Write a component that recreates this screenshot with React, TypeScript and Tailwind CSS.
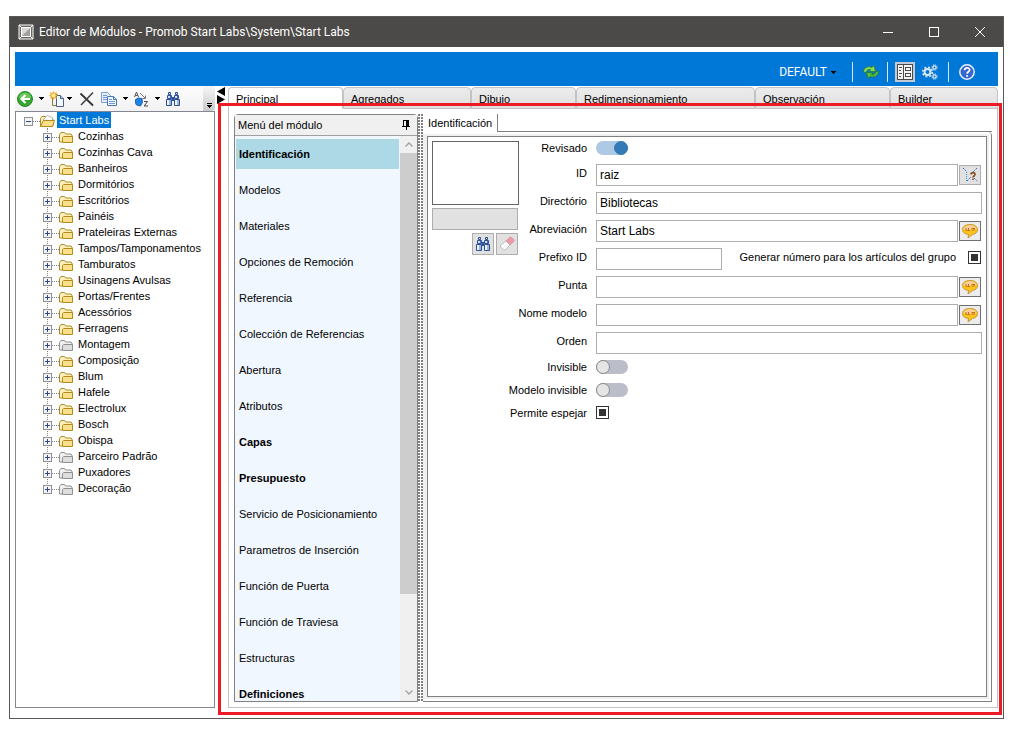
import React from 'react';

type FolderProps = {
    name: string;
    gray?: boolean;
};

type MenuItem = {
    label: string;
    bold?: boolean;
};

const folders: FolderProps[] = [
    { name: 'Cozinhas' },
    { name: 'Cozinhas Cava' },
    { name: 'Banheiros' },
    { name: 'Dormitórios' },
    { name: 'Escritórios' },
    { name: 'Painéis' },
    { name: 'Prateleiras Externas' },
    { name: 'Tampos/Tamponamentos' },
    { name: 'Tamburatos' },
    { name: 'Usinagens Avulsas' },
    { name: 'Portas/Frentes' },
    { name: 'Acessórios' },
    { name: 'Ferragens' },
    { name: 'Montagem', gray: true },
    { name: 'Composição' },
    { name: 'Blum' },
    { name: 'Hafele' },
    { name: 'Electrolux' },
    { name: 'Bosch' },
    { name: 'Obispa' },
    { name: 'Parceiro Padrão', gray: true },
    { name: 'Puxadores', gray: true },
    { name: 'Decoração', gray: true },
];

const menuItems: MenuItem[] = [
    { label: 'Identificación', bold: true },
    { label: 'Modelos' },
    { label: 'Materiales' },
    { label: 'Opciones de Remoción' },
    { label: 'Referencia' },
    { label: 'Colección de Referencias' },
    { label: 'Abertura' },
    { label: 'Atributos' },
    { label: 'Capas', bold: true },
    { label: 'Presupuesto', bold: true },
    { label: 'Servicio de Posicionamiento' },
    { label: 'Parametros de Inserción' },
    { label: 'Función de Puerta' },
    { label: 'Función de Traviesa' },
    { label: 'Estructuras' },
    { label: 'Definiciones', bold: true },
];

const tabs = ['Principal', 'Agregados', 'Dibujo', 'Redimensionamiento', 'Observación', 'Builder'];

/* ---------- icons ---------- */

const Caret = () => (
    <svg width="5" height="3" viewBox="0 0 5 3" shapeRendering="crispEdges">
        <path d="M0 0h5v1H4v1H3v1H2V2H1V1H0z" fill="#000" />
    </svg>
);

const BackIcon = () => (
    <svg width="16" height="16" viewBox="0 0 16 16">
        <circle cx="8" cy="8" r="7.500" fill="#35a52f" stroke="#2c8a2a" />
        <path d="M2 7a6 5.500 0 0 1 12 0q-6 2-12 0z" fill="#8fdc78" opacity=".6" />
        <path d="M13 8H5M8.500 4 4.500 8l4 4" fill="none" stroke="#fff" strokeWidth="2.200" />
    </svg>
);

const NewIcon = () => (
    <svg width="16" height="16" viewBox="0 0 16 16">
        <path d="M3.500 3.500h5v11h-5z" fill="#f3f3f3" stroke="#8a7440" />
        <path d="M7.500 4.500h4l3 3v8h-7z" fill="#f4f8ff" stroke="#4a5f8c" />
        <path d="M11.500 4.500v3h3" fill="#c5d6f2" stroke="#4a5f8c" />
        <path d="M4.500 0l1.200 2.200L8 1l-.8 2.500L9 4.500l-1.800 1L8 8 5.700 6.800 4.500 9 3.300 6.800 1 8l.8-2.500-1.800-1 1.800-1L1 1l2.300 1.200z" fill="#f2a52a" />
        <circle cx="4.500" cy="4.500" r="2" fill="#ffee9a" />
    </svg>
);

const DeleteIcon = () => (
    <svg width="16" height="16" viewBox="0 0 16 16">
        <path d="M1.500 2.500l12.500 12" stroke="#333" strokeWidth="1.800" />
        <path d="M14 1.500 2 14" stroke="#444" strokeWidth="1.600" />
    </svg>
);

const CopyIcon = () => (
    <svg width="16" height="16" viewBox="0 0 16 16">
        <path d="M.5 1.500h6l3 3v7h-9z" fill="#e6effb" stroke="#7d9fd6" />
        <path d="M2 4.500h4M2 6.500h4M2 8.500h4" stroke="#6f98d8" />
        <path d="M6.500 5.500h6l3 3v6h-9z" fill="#f2f7fe" stroke="#4a76bd" />
        <path d="M12.500 5.500v3h3" fill="none" stroke="#4a76bd" />
        <path d="M8 8.500h3M8 10.500h6M8 12.500h6" stroke="#6f98d8" />
    </svg>
);

const SortIcon = () => (
    <svg width="16" height="16" viewBox="0 0 16 16">
        <path d="M1.500 6 3.500 1l2 5M2.500 4.500h2" fill="none" stroke="#555" />
        <path d="M7 2l5 5M12.500 4.500v3h-3" fill="none" stroke="#777" />
        <path d="M2.500 8.500 5 7l4 .5.500 4-2 3.500-4-1-1-2z" fill="#1e84e4" stroke="#14509c" strokeWidth=".8" />
        <path d="M11 10.500h3.500l-3.300 4.500H15" fill="none" stroke="#333" strokeWidth=".9" />
    </svg>
);

const BinocularsIcon = () => (
    <svg width="16" height="16" viewBox="0 0 16 16">
        <path d="M3.500 1.500h2v2h-2zM10.500 1.500h2v2h-2z" fill="#dbe5f5" stroke="#2d4f96" />
        <path d="M2.500 4.500h4v3h-4zM9.500 4.500h4v3h-4z" fill="#cfdcf2" stroke="#2d4f96" />
        <path d="M1.500 8.500h5v6h-5zM9.500 8.500h5v6h-5z" fill="#eef3fb" stroke="#2d4f96" />
        <path d="M7 6h2v4H7z" fill="#2d4f96" />
        <path d="M5 9v5M13 9v5M5.500 5v2M12.500 5v2" stroke="#4d74bd" />
    </svg>
);

const EraserIcon = () => (
    <svg width="16" height="16" viewBox="0 0 16 16">
        <path d="M7 5 10.500 1.500q1-1 2.200 0l2 2q1 1 0 2L11 9z" fill="#ef9aa6" stroke="#d98591" strokeWidth=".7" />
        <path d="M7 5l4 4-4.500 4.500q-1.200 1-2.200 0l-2.500-2.400q-1-1 0-2z" fill="#f7f7f7" stroke="#a8a8a8" strokeWidth=".7" />
        <path d="M3 11l5-5" stroke="#fff" />
    </svg>
);

const RefreshIcon = () => (
    <svg width="16" height="16" viewBox="0 0 16 16">
        <path d="M.5 8C.5 4 5 1.500 9 3.500L11 1.500l1.500 6-6.500-.5 1.500-1.500C5.500 5 3.500 6 3 8.500z" fill="#8bdc5c" stroke="#2a7f20" strokeWidth=".8" />
        <path d="M15.500 7.500c.2 4-4.500 6.700-8.500 4.700L5 14.500 3.500 8.500l6.500.5-1.500 1.500c2 .7 4-.5 4.500-3z" fill="#5cc03e" stroke="#2a7f20" strokeWidth=".8" />
    </svg>
);

const PropertiesIcon = () => (
    <svg width="16" height="16" viewBox="0 0 16 16" shapeRendering="crispEdges">
        <path d="M0 0h16v16H0z" fill="#4a4a4a" />
        <path d="M1 1h5v14H1zM7 1h8v14H7z" fill="#f4f4f4" />
        <path d="M2 3h3v1H2zM2 6h2v1H2zM2 9h3v1H2zM2 12h2v1H2zM8 3h6v4H8zM8 9h6v4H8z" fill="#4a4a4a" />
        <path d="M9 4h4v2H9zM9 10h4v2H9z" fill="#fff" />
    </svg>
);

const GearsIcon = () => (
    <svg width="16" height="16" viewBox="0 0 16 16" fill="none" stroke="#e3e9f0">
        <circle cx="5.500" cy="8" r="3" strokeWidth="2" />
        <circle cx="5.500" cy="8" r="4.800" strokeWidth="1.600" strokeDasharray="1.900 1.870" />
        <circle cx="12.500" cy="3.500" r="1.600" strokeWidth="1.200" />
        <circle cx="12.500" cy="3.500" r="2.700" strokeDasharray="1.100 1.020" />
        <circle cx="12.500" cy="12.500" r="1.600" strokeWidth="1.200" />
        <circle cx="12.500" cy="12.500" r="2.700" strokeDasharray="1.100 1.020" />
    </svg>
);

const HelpIcon = () => (
    <svg width="16" height="16" viewBox="0 0 16 16">
        <circle cx="8" cy="8" r="7.200" fill="#3565cf" stroke="#e9effb" strokeWidth="1.500" />
        <path d="M5.500 6.300C5.500 3 10.700 3 10.600 6c0 1.800-2.500 1.800-2.500 3.800" fill="none" stroke="#fff" strokeWidth="1.700" />
        <path d="M7.200 11h1.800v1.800H7.200z" fill="#fff" />
    </svg>
);

const BalloonIcon = () => (
    <svg width="16" height="16" viewBox="0 0 16 16">
        <path d="M8 1.500c4.500 0 7.500 2 7.500 5s-2.500 4.700-5 5L6 15l.5-3.500c-3.500-.3-6-2-6-5s3-5 7.500-5z" fill="#f9c21c" stroke="#b98a2b" strokeWidth=".8" />
        <path d="M1.500 6c1-5 12-5 13 0-1 1-12 1-13 0z" fill="#f8cf98" />
        <path d="M4 5v2.500h1.500M6.500 5v2.500H8M9.500 5.500H13M9.500 7H13" fill="none" stroke="#cc6a1c" />
    </svg>
);

const IdHelpIcon = () => (
    <svg width="16" height="16" viewBox="0 0 16 16" fill="none">
        <path d="M1 1l3.500 3.500M15 1l-4 4M5 14l4-4M12 11l3.500 3.500" stroke="#2f62cf" strokeDasharray="1.500 .8" />
        <path d="M4.500 5v9" stroke="#29a3e0" strokeDasharray="1 1" />
        <path d="M9 7.500c0-2.500 4-2.500 4 0 0 1.500-2 1.500-2 3M11 11.500V13" stroke="#8a4a1a" strokeWidth="1.600" />
    </svg>
);

const FolderIcon = ({ gray, open }: { gray?: boolean; open?: boolean }) => {
    const line = gray ? '#8f8f8f' : '#b08a1e';
    const fill = gray ? '#dedede' : '#fbe08a';
    return (
        <svg width="16" height="16" viewBox="0 0 16 16" className="shrink-0">
            <path d="M.5 13V5.500l1.500-2h3.500l1 1.500H12l1 1v7z" fill={gray ? '#f0f0f0' : '#fff2bd'} stroke={line} />
            {open ? (
                <>
                    <path d="M3 7 7 2.500l5.500 2V8z" fill="#fff" stroke="#9a9a9a" strokeWidth=".7" />
                    <path d="M.5 13.500 3.500 7.500H14.500L12.500 13.500z" fill={fill} stroke={line} />
                </>
            ) : (
                <path d="M3.500 13.500v-5l1-1h9v6z" fill={fill} stroke={line} />
            )}
        </svg>
    );
};

const AppIcon = () => (
    <svg width="16" height="16" viewBox="0 0 16 16" fill="none">
        <path d="M1 1h14v14H1z" fill="#6a6967" stroke="#fff" />
        <path d="M3.500 3.500h9v9h-9z" fill="#d8d8d8" stroke="#fff" />
        <path d="M4 12 12 4v8z" fill="#a0a0a0" />
        <path d="M1 1l3 3M12 12l3 3M1 15l3-3M12 4l3-3" stroke="#fff" />
    </svg>
);

/* ---------- pieces ---------- */

const Expander = ({ open, name }: { open?: boolean; name: string }) => (
    <button
        aria-label={name}
        className="relative z-10 mt-[2px] flex size-[9px] shrink-0 items-center justify-center border border-[#919191] bg-[#f4f4f4]"
    >
        <svg width="5" height="5" viewBox="0 0 5 5" shapeRendering="crispEdges">
            <path d={open ? 'M0 2h5v1H0z' : 'M0 2h2V0h1v2h2v1H3v2H2V3H0z'} fill="#2c4a94" />
        </svg>
    </button>
);

const TreeRow: React.FC<FolderProps> = ({ name, gray }) => (
    <li className="flex h-4 items-center">
        <Expander name={name} />
        <span className="mt-[2px] w-[7px] border-t border-dotted border-[#808080]" />
        <span className="mt-[2px]">
            <FolderIcon gray={gray} />
        </span>
        <span className="pl-[3px] whitespace-nowrap">{name}</span>
    </li>
);

const ToolButton = ({ label, children }: { label: string; children: React.ReactNode }) => (
    <button aria-label={label} className="flex h-4 w-4 items-center justify-center">
        {children}
    </button>
);

const DropButton = ({ label }: { label: string }) => (
    <button aria-label={label} className="flex h-4 w-4 items-center justify-center">
        <Caret />
    </button>
);

const Row = ({ id, label, children }: { id: string; label: string; children: React.ReactNode }) => (
    <div className="flex h-[22px] gap-2">
        <label htmlFor={id} className="flex w-[69px] shrink-0 justify-end pr-px whitespace-nowrap leading-[18px]">
            {label}
        </label>
        {children}
    </div>
);

const SwitchRow = ({ id, label, children }: { id: string; label: string; children: React.ReactNode }) => (
    <div className="flex h-[17px] items-start gap-2">
        <label htmlFor={id} className="flex w-[69px] shrink-0 justify-end pr-px whitespace-nowrap leading-[14px]">
            {label}
        </label>
        {children}
    </div>
);

const TextInput = ({ id, value = '' }: { id: string; value?: string }) => (
    <input
        id={id}
        type="text"
        defaultValue={value}
        className="h-[22px] w-full min-w-0 border border-[#abadb3] bg-white px-[3px] text-[12px] outline-none"
    />
);

const Toggle = ({ id, on }: { id: string; on?: boolean }) => (
    <input
        id={id}
        type="checkbox"
        role="switch"
        defaultChecked={on}
        className="flex h-[14px] w-8 appearance-none items-center rounded-full bg-[#bbbdc9] before:size-[14px] before:rounded-full before:border before:border-[#8a8a8a] before:bg-[#e5e5e5] checked:justify-end checked:bg-[#adc9e3] checked:before:border-[#337ab7] checked:before:bg-[#337ab7]"
    />
);

const Check = ({ id }: { id: string }) => (
    <input
        id={id}
        type="checkbox"
        defaultChecked
        className="size-[13px] shrink-0 appearance-none border border-[#333] p-[2px] checked:bg-[#333] checked:bg-clip-content"
    />
);

const SideButton = ({ label, dark, children }: { label: string; dark?: boolean; children: React.ReactNode }) => (
    <button
        type="button"
        aria-label={label}
        className={
            dark
                ? 'mt-px mr-px flex h-5 w-[22px] shrink-0 items-center justify-center border border-[#707070] bg-[#ececec]'
                : 'mt-px mr-px flex h-5 w-[22px] shrink-0 items-center justify-center border border-[#adadad] bg-[#e1e1e1]'
        }
    >
        {children}
    </button>
);

/* ---------- panels ---------- */

const TitleBar = () => (
    <header className="flex h-[30px] shrink-0 items-center bg-[#4c4a48] text-white">
        <span className="pl-2">
            <AppIcon />
        </span>
        <h1 className="flex-1 truncate pl-[5px] font-[Roboto,'Open_Sans',sans-serif] text-[12px]">
            Editor de Módulos - Promob Start Labs\System\Start Labs
        </h1>
        <button aria-label="Minimizar" className="flex h-full w-[46px] items-center justify-center">
            <span className="h-px w-[10px] bg-white" />
        </button>
        <button aria-label="Maximizar" className="flex h-full w-[46px] items-center justify-center">
            <span className="size-[10px] border border-white" />
        </button>
        <button aria-label="Cerrar" className="flex h-full w-[46px] items-center justify-center">
            <svg width="10" height="10" viewBox="0 0 10 10">
                <path d="M0 0l10 10M10 0 0 10" stroke="#fff" />
            </svg>
        </button>
    </header>
);

const BlueBar = () => (
    <div className="flex h-[34px] shrink-0 items-center justify-end bg-[#0078d7] pt-[6px] pr-[23px]">
        <button className="mr-4 flex items-center gap-1 font-[Roboto,'Open_Sans',sans-serif] text-[12px] text-white">
            DEFAULT
            <Caret />
        </button>
        <span className="mr-[10px] h-5 w-px bg-[#d8e8f6]" />
        <ToolButton label="Actualizar">
            <RefreshIcon />
        </ToolButton>
        <span className="mr-[7px] ml-2 h-5 w-px bg-[#d8e8f6]" />
        <button aria-label="Propiedades" className="mr-[7px] flex size-5 items-center justify-center bg-[#c3cbd6]">
            <PropertiesIcon />
        </button>
        <ToolButton label="Configuración">
            <GearsIcon />
        </ToolButton>
        <span className="mx-[10px] h-5 w-px bg-[#d8e8f6]" />
        <ToolButton label="Ayuda">
            <HelpIcon />
        </ToolButton>
    </div>
);

const TreePanel = () => (
    <aside className="flex w-[200px] shrink-0 flex-col">
        <div className="flex h-[25px] shrink-0 items-center bg-linear-to-b from-[#fcfcfc] to-[#f2f2f2] pl-[2px]">
            <ToolButton label="Volver"><BackIcon /></ToolButton>
            <DropButton label="Opciones de volver" />
            <ToolButton label="Nuevo"><NewIcon /></ToolButton>
            <button aria-label="Opciones de nuevo" className="mr-[6px] flex h-4 w-2 items-center justify-center">
                <Caret />
            </button>
            <ToolButton label="Eliminar"><DeleteIcon /></ToolButton>
            <span className="w-[6px]" />
            <ToolButton label="Copiar"><CopyIcon /></ToolButton>
            <DropButton label="Opciones de copiar" />
            <ToolButton label="Ordenar"><SortIcon /></ToolButton>
            <DropButton label="Opciones de ordenar" />
            <ToolButton label="Buscar"><BinocularsIcon /></ToolButton>
            <button
                aria-label="Más botones"
                className="ml-auto flex h-full w-3 flex-col items-center justify-end gap-px rounded-r bg-linear-to-b from-[#f7f7f7] to-[#c9c9c9] pb-[3px]"
            >
                <span className="h-px w-[5px] bg-black" />
                <Caret />
            </button>
        </div>
        <div className="flex-1 overflow-hidden border border-[#828790] bg-white pl-2">
            <div className="flex h-4 items-center">
                <Expander open name="Start Labs" />
                <span className="mt-[2px] w-[7px] border-t border-dotted border-[#808080]" />
                <span className="mt-[2px]">
                    <FolderIcon open />
                </span>
                <span className="ml-px h-4 bg-[#0078d7] px-[2px] leading-4 whitespace-nowrap text-white">Start Labs</span>
            </div>
            <div className="relative">
                <span className="absolute top-0 bottom-2 left-[23px] border-l border-dotted border-[#808080]" />
                <ul className="pl-[19px]">
                    {folders.map(folder => (
                        <TreeRow key={folder.name} name={folder.name} gray={folder.gray} />
                    ))}
                </ul>
            </div>
        </div>
    </aside>
);

const ModuleMenu = () => (
    <nav className="flex w-[184px] shrink-0 flex-col rounded-t-sm border border-[#828282]">
        <div className="flex h-[21px] shrink-0 items-center justify-between border-b border-[#a0a0a0] bg-[#f0f0f0] pr-[7px] pl-[3px]">
            <h2>Menú del módulo</h2>
            <button aria-label="Fijar">
                <svg width="8" height="10" viewBox="0 0 8 10" shapeRendering="crispEdges">
                    <path d="M1 0h6v6h1v1H5v3H4V7H0V6h1zM2 1v5h2V1z" fill="#000" fillRule="evenodd" />
                </svg>
            </button>
        </div>
        <div className="flex min-h-0 flex-1 bg-[#f0f7ff]">
            <ul className="h-full flex-1 overflow-hidden px-px pt-[3px]">
                {menuItems.map((item, index) => (
                    <li key={item.label} className="pb-[6px]">
                        <a
                            href="#"
                            className={
                                'block h-[30px] pl-[3px] leading-[30px] whitespace-nowrap' +
                                (item.bold ? ' font-bold' : '') +
                                (index === 0 ? ' bg-[#add8e6]' : '')
                            }
                        >
                            {item.label}
                        </a>
                    </li>
                ))}
            </ul>
            <div className="flex w-[17px] flex-col bg-[#f0f0f0]">
                <button aria-label="Subir" className="flex h-[17px] shrink-0 items-center justify-center">
                    <svg width="8" height="5" viewBox="0 0 8 5">
                        <path d="M.5 4.500 4 1l3.500 3.500" fill="none" stroke="#a0a0a0" strokeWidth="1.300" />
                    </svg>
                </button>
                <div className="min-h-0 flex-1">
                    <div className="h-[83%] bg-[#cdcdcd]" />
                </div>
                <button aria-label="Bajar" className="flex h-[17px] shrink-0 items-center justify-center">
                    <svg width="8" height="5" viewBox="0 0 8 5">
                        <path d="M.5.5 4 4 7.500.5" fill="none" stroke="#a0a0a0" strokeWidth="1.300" />
                    </svg>
                </button>
            </div>
        </div>
    </nav>
);

const IdentificationForm = () => (
    <form className="flex flex-1 border border-[#808080] bg-white p-1">
        <div className="w-[87px] shrink-0">
            <div className="h-16 border border-[#646464] bg-white" />
            <div className="mt-[3px] mr-px h-[22px] border border-[#adadad] bg-[#e1e1e1]" />
            <div className="mt-[3px] mr-px flex justify-end gap-[2px]">
                <button type="button" aria-label="Buscar imagen" className="flex size-[22px] items-center justify-center border border-[#adadad] bg-[#e1e1e1]">
                    <BinocularsIcon />
                </button>
                <button type="button" aria-label="Borrar imagen" className="flex size-[22px] items-center justify-center border border-[#adadad] bg-[#e1e1e1]">
                    <EraserIcon />
                </button>
            </div>
        </div>
        <div className="flex min-w-0 flex-1 flex-col gap-[6px]">
            <SwitchRow id="revisado" label="Revisado">
                <Toggle id="revisado" on />
            </SwitchRow>
            <Row id="id" label="ID">
                <div className="flex flex-1 gap-px">
                    <TextInput id="id" value="raiz" />
                    <SideButton label="Ayuda de ID"><IdHelpIcon /></SideButton>
                </div>
            </Row>
            <Row id="directorio" label="Directório">
                <TextInput id="directorio" value="Bibliotecas" />
            </Row>
            <Row id="abreviacion" label="Abreviación">
                <div className="flex flex-1 gap-px">
                    <TextInput id="abreviacion" value="Start Labs" />
                    <SideButton dark label="Traducir abreviación"><BalloonIcon /></SideButton>
                </div>
            </Row>
            <Row id="prefixo" label="Prefixo ID">
                <div className="flex flex-1">
                    <div className="w-[126px] shrink-0">
                        <TextInput id="prefixo" />
                    </div>
                    <label htmlFor="generar" className="ml-auto pr-3 leading-[18px] whitespace-nowrap">
                        Generar número para los artículos del grupo
                    </label>
                    <span className="mr-px pt-[3px]">
                        <Check id="generar" />
                    </span>
                </div>
            </Row>
            <Row id="punta" label="Punta">
                <div className="flex flex-1 gap-px">
                    <TextInput id="punta" />
                    <SideButton dark label="Traducir punta"><BalloonIcon /></SideButton>
                </div>
            </Row>
            <Row id="nome" label="Nome modelo">
                <div className="flex flex-1 gap-px">
                    <TextInput id="nome" />
                    <SideButton dark label="Traducir nome"><BalloonIcon /></SideButton>
                </div>
            </Row>
            <Row id="orden" label="Orden">
                <TextInput id="orden" />
            </Row>
            <SwitchRow id="invisible" label="Invisible">
                <Toggle id="invisible" />
            </SwitchRow>
            <SwitchRow id="modelo-invisible" label="Modelo invisible">
                <Toggle id="modelo-invisible" />
            </SwitchRow>
            <SwitchRow id="espejar" label="Permite espejar">
                <Check id="espejar" />
            </SwitchRow>
        </div>
    </form>
);

const App = () => {
    return (
        <div className="flex h-screen min-h-[560px] flex-col bg-white pt-4 pr-5 pb-[14px] pl-[9px] font-['Liberation_Sans',Arial,sans-serif] text-[11px] text-black">
            <div className="relative flex min-h-0 flex-1 flex-col border border-[#5a5856]">
                <TitleBar />
                <div className="flex min-h-0 flex-1 flex-col px-[5px] pt-[5px] pb-[10px]">
                    <BlueBar />
                    <div className="flex min-h-0 flex-1">
                        <TreePanel />
                        <div className="flex w-[13px] shrink-0 flex-col items-center pt-px pr-px">
                            <svg width="8" height="17" viewBox="0 0 8 17">
                                <path d="M8 0v9L0 4.500zM0 8v9l8-4.500z" fill="#000" />
                            </svg>
                        </div>
                        <main className="flex min-w-0 flex-1 flex-col pt-px">
                            <div role="tablist" className="grid h-[21px] shrink-0 grid-cols-[115fr_128fr_105fr_179fr_135fr_108fr]">
                                {tabs.map((tab, index) => (
                                    <button
                                        key={tab}
                                        role="tab"
                                        aria-selected={index === 0}
                                        className={
                                            'rounded-t-sm border border-[#c3c3c3] pt-[3px] pl-[7px] text-left ' +
                                            (index === 0
                                                ? 'border-b-white bg-white'
                                                : 'bg-linear-to-b from-[#ececec] to-[#e0e0e0]')
                                        }
                                    >
                                        {tab}
                                    </button>
                                ))}
                            </div>
                            <div className="flex min-h-0 flex-1 border-x border-b border-[#c3c3c3] pt-[6px] pr-[5px] pb-[5px] pl-[5px]">
                                <ModuleMenu />
                                <div className="flex w-[5px] shrink-0 justify-between">
                                    <span className="w-[2px] bg-[repeating-linear-gradient(#808080_0_2px,#fff_2px_3px)]" />
                                    <span className="w-[2px] bg-[repeating-linear-gradient(#808080_0_2px,#fff_2px_3px)]" />
                                </div>
                                <section className="flex min-w-0 flex-1 flex-col">
                                    <div className="flex h-[18px] shrink-0">
                                        <h2 className="w-[75px] border-r border-[#808080] pl-[5px] leading-[18px]">Identificación</h2>
                                        <span className="flex-1 border-b border-[#808080]" />
                                    </div>
                                    <div className="flex flex-1 rounded-tr-sm border-r border-b border-[#808080] pt-[2px] pr-[2px] pb-[2px]">
                                        <div className="flex flex-1 bg-[#f0f0f0] pt-[2px] pr-[2px] pb-[2px] pl-[4px]">
                                            <IdentificationForm />
                                        </div>
                                    </div>
                                </section>
                            </div>
                        </main>
                    </div>
                </div>
                {/* highlight frame over the tab page */}
                <div className="pointer-events-none absolute top-[86px] right-px bottom-[3px] left-[208px] border-[3px] border-[#ed1c24]" />
            </div>
        </div>
    );
};

export default App;
